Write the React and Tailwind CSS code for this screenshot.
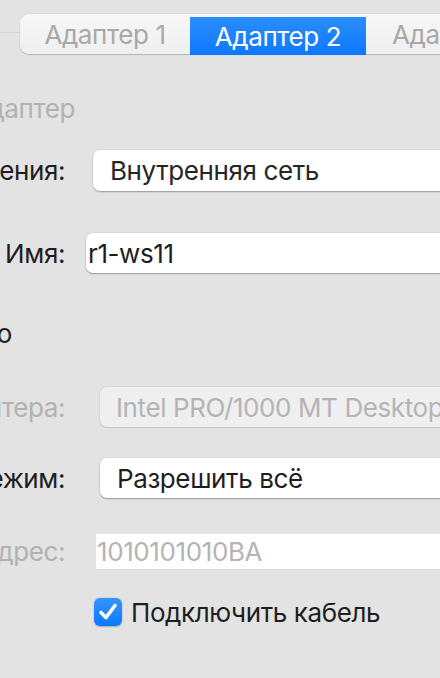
import React from "react";

const font = { fontFamily: "Inter, 'Noto Sans', sans-serif" };

function Tabs() {
  return (
    <div className="flex items-start h-[55px] pt-[14px]">
      <div className="w-[20px] shrink-0 h-px bg-[#d6d6d6] mt-[18px]" />
      <div className="flex shrink-0 h-[40px] w-[440px] rounded-l-[9px] bg-gradient-to-b from-[#f7f7f7] to-[#efefef] shadow-[0_1px_1px_rgba(0,0,0,0.18),0_0_0_0.5px_rgba(0,0,0,0.06)]">
        <div className="w-[170px] shrink-0 flex items-center justify-center text-[26px] text-[#a8a8a8] whitespace-nowrap">
          Адаптер 1
        </div>
        <div className="w-[176px] shrink-0 h-[38px] mt-[3px] flex items-center justify-center text-[26px] text-white bg-gradient-to-b from-[#2a8dfd] to-[#0a79ff] whitespace-nowrap">
          Адаптер 2
        </div>
        <div className="shrink-0 flex items-center pl-[26px] text-[26px] text-[#a8a8a8] whitespace-nowrap">
          Адаптер 3
        </div>
      </div>
    </div>
  );
}

function Label({ children, gray, width = "w-[65px]" }) {
  return (
    <div className={`${width} shrink-0 flex justify-end whitespace-nowrap text-[26px] ${gray ? "text-[#b2b2b2]" : "text-[#1e1e1e]"}`}>
      {children}
    </div>
  );
}

export default function App() {
  return (
    <div className="w-[440px] h-[678px] bg-[#e3e3e3] overflow-hidden tracking-[-0.4px]" style={font}>
      <Tabs />

      {/* включить адаптер */}
      <div className="mt-[37px] h-[32px] flex items-center">
        <Label gray width="w-[75px]">Включить сетевой адаптер</Label>
      </div>

      {/* тип подключения */}
      <div className="mt-[26px] h-[41px] flex items-center">
        <Label>Тип подключения:</Label>
        <div className="ml-[28px] w-[400px] h-[41px] shrink-0 flex items-center pl-[17px] bg-white rounded-l-[7px] shadow-[0_1px_1.5px_rgba(0,0,0,0.3),0_0_0_0.5px_rgba(0,0,0,0.08)] text-[26px] text-[#262626] whitespace-nowrap">
          Внутренняя сеть
        </div>
      </div>

      {/* имя */}
      <div className="mt-[42px] h-[40px] flex items-center">
        <Label>Имя:</Label>
        <div className="ml-[21px] w-[400px] h-[40px] shrink-0 flex items-center pl-[2px] bg-white rounded-l-[7px] shadow-[0_1px_1.5px_rgba(0,0,0,0.3),0_0_0_0.5px_rgba(0,0,0,0.08)] text-[26px] text-[#1e1e1e] whitespace-nowrap">
          r1-ws11
        </div>
      </div>

      {/* дополнительно */}
      <div className="mt-[44px] h-[32px] flex items-center">
        <Label width="w-[12px]">Дополнительно</Label>
      </div>

      {/* тип адаптера */}
      <div className="mt-[38px] h-[40px] flex items-center">
        <Label gray>Тип адаптера:</Label>
        <div className="ml-[35px] w-[400px] h-[40px] shrink-0 flex items-center pl-[16px] bg-[#efefef] rounded-l-[7px] shadow-[0_0_0_1px_rgba(0,0,0,0.05),0_1px_1px_rgba(0,0,0,0.08)] text-[26px] text-[#b4b4b4] whitespace-nowrap">
          Intel PRO/1000 MT Desktop (82540EM)
        </div>
      </div>

      {/* неразборчивый режим */}
      <div className="mt-[31px] h-[40px] flex items-center">
        <Label>Неразборчивый режим:</Label>
        <div className="ml-[35px] w-[400px] h-[40px] shrink-0 flex items-center pl-[17px] bg-white rounded-l-[7px] shadow-[0_1px_1.5px_rgba(0,0,0,0.3),0_0_0_0.5px_rgba(0,0,0,0.08)] text-[26px] text-[#1e1e1e] whitespace-nowrap">
          Разрешить всё
        </div>
      </div>

      {/* mac */}
      <div className="mt-[35px] h-[37px] flex items-center">
        <Label gray>MAC-адрес:</Label>
        <div className="ml-[31px] w-[400px] h-[37px] shrink-0 flex items-center pl-[1px] bg-white border-b border-[#d9d9d9] shadow-[inset_0_1px_0_#e6e6e6] text-[26px] text-[#b4b4b4] whitespace-nowrap">
          1010101010BA
        </div>
      </div>

      {/* кабель */}
      <div className="mt-[28px] h-[28px] flex items-center pl-[94px]">
        <div className="w-[28px] h-[28px] shrink-0 rounded-[6px] bg-gradient-to-b from-[#3393ff] to-[#0a79ff] shadow-[0_0.5px_1.5px_rgba(0,0,0,0.25)] flex items-center justify-center">
          <svg width="22" height="22" viewBox="0 0 22 22" fill="none">
            <path d="M4 11.5 L9 16.5 L18 4.5" stroke="white" strokeWidth="3.6" strokeLinecap="round" strokeLinejoin="round" />
          </svg>
        </div>
        <span className="ml-[9px] text-[26px] text-[#1e1e1e] whitespace-nowrap">Подключить кабель</span>
      </div>
    </div>
  );
}
